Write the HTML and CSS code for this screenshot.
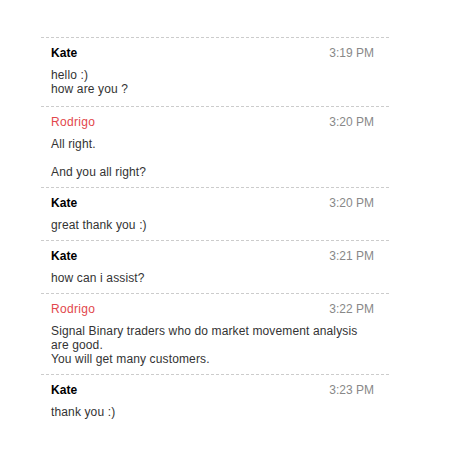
FILE: index.html
```html
<!DOCTYPE html>
<html lang="en">
<head>
    <meta charset="UTF-8">
    <title>Chat history</title>
    <link rel="stylesheet" href="styles.css">
</head>
<body>
    <div class="chat">
        <!-- 消息列表 -->
        <div class="message">
            <div class="message-head">
                <span class="name">Kate</span>
                <span class="time">3:19 PM</span>
            </div>
            <div class="text">hello :)<br>how are you ?</div>
        </div>
        <div class="message">
            <div class="message-head">
                <span class="name agent">Rodrigo</span>
                <span class="time">3:20 PM</span>
            </div>
            <div class="text">All right.<br><br>And you all right?</div>
        </div>
        <div class="message">
            <div class="message-head">
                <span class="name">Kate</span>
                <span class="time">3:20 PM</span>
            </div>
            <div class="text">great thank you :)</div>
        </div>
        <div class="message">
            <div class="message-head">
                <span class="name">Kate</span>
                <span class="time">3:21 PM</span>
            </div>
            <div class="text">how can i assist?</div>
        </div>
        <div class="message">
            <div class="message-head">
                <span class="name agent">Rodrigo</span>
                <span class="time">3:22 PM</span>
            </div>
            <div class="text">Signal Binary traders who do market movement analysis are good.<br>You will get many customers.</div>
        </div>
        <div class="message">
            <div class="message-head">
                <span class="name">Kate</span>
                <span class="time">3:23 PM</span>
            </div>
            <div class="text">thank you :)</div>
        </div>
    </div>
</body>
</html>
```

FILE: styles.css
```css
body {
    background: #fff;
    font-family: "Liberation Sans", Arial, sans-serif;
    font-size: 12px;
    color: #333;
    margin: 0;
    padding: 0;
}
.chat {
    width: 348px;
    margin: 37px 0 0 41px;
}
.message {
    border-top: 1px dashed #ccc;
    padding: 8px 15px 8px 10px;
}
.message:first-child {
    padding-bottom: 10px;
}
.message-head {
    display: flex;
    justify-content: space-between;
    margin-bottom: 8px;
}
.name {
    font-weight: bold;
    color: #000;
    letter-spacing: 0.05px;
}
.name.agent {
    font-weight: normal;
    color: #e2474c;
    letter-spacing: 0.3px;
}
.time {
    color: #888;
}
.text {
    line-height: normal;
    letter-spacing: 0.13px;
}
```
